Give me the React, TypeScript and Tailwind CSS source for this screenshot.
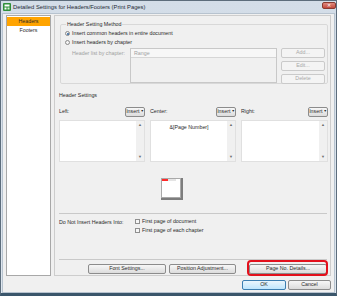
import React from "react";

const Btn = ({
  children,
  className = "",
  disabled = false,
}: {
  children: React.ReactNode;
  className?: string;
  disabled?: boolean;
}) => (
  <div
    className={`h-[10px] flex items-center justify-center rounded-[2px] border leading-none ${
      disabled
        ? "border-[#cacaca] bg-[#f4f4f4] text-[#a8a8a8]"
        : "border-[#8c8c8c] bg-gradient-to-b from-[#f7f7f7] to-[#dcdcdc] text-[#2a2a2a]"
    } ${className}`}
  >
    {children}
  </div>
);

const InsertBtn = () => (
  <Btn className="w-[20px] gap-[1px]">
    Insert<span className="text-[3.5px]">▼</span>
  </Btn>
);

const TextBox = ({ text }: { text?: string }) => (
  <div className="h-[42px] bg-white border border-[#e0e0e0] flex">
    <div className="flex-1 text-center pt-[3px] text-[#2a2a2a]">{text}</div>
    <div className="w-[8px] bg-[#f0f0f0] flex flex-col justify-between items-center py-[1px] text-[4px] leading-[6px] text-[#6d6d6d]">
      <span>▲</span>
      <span>▼</span>
    </div>
  </div>
);

const Radio = ({ checked = false, label }: { checked?: boolean; label: string }) => (
  <div className="flex items-center gap-[2px] h-[9px]">
    <div className="w-[5px] h-[5px] rounded-full border border-[#8a8a8a] bg-[#f4f4f4] flex items-center justify-center">
      {checked && <div className="w-[2px] h-[2px] rounded-full bg-[#2a5f9a]" />}
    </div>
    <span className="text-[#2a2a2a]">{label}</span>
  </div>
);

const Check = ({ label }: { label: string }) => (
  <div className="flex items-center gap-[2px] h-[9px]">
    <div className="w-[5px] h-[5px] border border-[#8f8f8f] bg-[#f6f6f6]" />
    <span className="text-[#2a2a2a]">{label}</span>
  </div>
);

export default function App() {
  return (
    <div className="w-[337px] h-[296px] bg-gradient-to-b from-[#d3dde8] to-[#dfe7ef] border-t border-x border-[#5d6d7c] border-b-[3px] border-b-[#3a566b] flex flex-col font-['Liberation_Sans',Arial,sans-serif] text-[5.3px] overflow-hidden">
      {/* title bar */}
      <div className="h-[12px] flex items-center pl-[2px]">
        <svg width="8" height="8" viewBox="0 0 8 8">
          <rect x="0" y="0" width="8" height="8" rx="1" fill="#2f8f3a" />
          <rect x="1.5" y="1.5" width="5" height="2" fill="#ffffff" />
          <rect x="1.5" y="4.5" width="2" height="2" fill="#ffffff" />
          <rect x="4.5" y="4.5" width="2" height="2" fill="#d6f0d6" />
        </svg>
        <span className="ml-[2px] text-[5.8px] text-[#1d2a36]">
          Detailed Settings for Headers/Footers (Print Pages)
        </span>
        <div className="ml-auto -mt-[3px] w-[14px] h-[7px] rounded-[2px] bg-gradient-to-b from-[#e08a80] to-[#c2483c] border border-[#8a3a30] flex items-center justify-center text-white text-[5px] leading-none">
          ✕
        </div>
      </div>

      {/* client area */}
      <div className="flex-1 mx-[1px] bg-[#f0f0f0] border border-[#b7c3cf] flex flex-col">
        <div className="flex mt-[1px] ml-[3px] gap-[3px]">
          {/* sidebar */}
          <div className="w-[45px] h-[261px] bg-white border border-[#a8a8a8] pt-[1px] flex flex-col">
            <div className="h-[9px] bg-[#ffa400] flex items-center justify-center text-[#2a2a2a]">Headers</div>
            <div className="h-[10px] flex items-center justify-center text-[#2a2a2a]">Footers</div>
          </div>

          {/* main panel */}
          <div className="w-[277px] h-[261px] border border-[#cdcdcd] pl-[4px] pr-[3px] flex flex-col">
            <fieldset className="mt-[4px] ml-[1px] border border-[#d8d8d8] rounded-[2px] pl-[4px] pr-[2px] pb-[1px] h-[64px]">
              <legend className="px-[1px] ml-[1px] leading-[8px] text-[#2a2a2a]">Header Setting Method</legend>
              <div className="mt-[1px]">
                <Radio checked label="Insert common headers in entire document" />
                <Radio label="Insert headers by chapter" />
              </div>
              <div className="flex mt-[1px]">
                <div className="w-[65px] pl-[7px] pt-[2px] text-[#a0a0a0]">Header list by chapter:</div>
                <div className="w-[147px] h-[35px] border border-[#c8c8c8] bg-[#f0f0f0]">
                  <div className="h-[9px] border-b border-[#d6d6d6] bg-[#f7f7f7] pl-[3px] leading-[9px] text-[#a0a0a0]">
                    Range
                  </div>
                </div>
                <div className="ml-[4px] w-[44px] flex flex-col gap-[3px]">
                  <Btn disabled>Add...</Btn>
                  <Btn disabled>Edit...</Btn>
                  <Btn disabled>Delete</Btn>
                </div>
              </div>
            </fieldset>

            <div className="mt-[7px] leading-[8px] text-[#2a2a2a]">Header Settings</div>

            <div className="mt-[8px] grid grid-cols-[86px_86px_87px] gap-x-[5px] w-[268px]">
              <div className="flex items-center justify-between text-[#2a2a2a]">
                <span>Left:</span>
                <InsertBtn />
              </div>
              <div className="flex items-center justify-between text-[#2a2a2a]">
                <span>Center:</span>
                <InsertBtn />
              </div>
              <div className="flex items-center justify-between text-[#2a2a2a]">
                <span>Right:</span>
                <InsertBtn />
              </div>
              <div className="mt-[3px]">
                <TextBox />
              </div>
              <div className="mt-[3px]">
                <TextBox text="&[Page Number]" />
              </div>
              <div className="mt-[3px]">
                <TextBox />
              </div>
            </div>

            {/* page preview */}
            <div className="mt-[16px] ml-[102px] w-[20px] h-[20px] bg-white border border-[#a9a9a9] shadow-[1px_1px_0_1px_#7d7d7d]">
              <div className="flex h-[2px]">
                <div className="w-[6px] bg-[#ff2a2a]" />
                <div className="w-[8px] bg-[#e4e4e4]" />
              </div>
            </div>

            <div className="mt-[15px] h-px w-[268px] bg-[#c9c9c9]" />

            <div className="mt-[3px] flex">
              <div className="w-[76px] pt-[2px] text-[#2a2a2a]">Do Not Insert Headers Into:</div>
              <div className="flex flex-col">
                <Check label="First page of document" />
                <Check label="First page of each chapter" />
              </div>
            </div>

            <div className="mt-[24px] h-px w-[268px] bg-[#c9c9c9]" />

            <div className="mt-[4px] flex w-[268px] justify-end">
              <Btn className="w-[78px]">Font Settings...</Btn>
              <Btn className="w-[67px] ml-[3px]">Position Adjustment...</Btn>
              <div className="relative ml-[13px]">
                <Btn className="w-[78px]">Page No. Details...</Btn>
                <div className="absolute -left-[2px] -right-[1px] -top-[4px] -bottom-[2px] border-2 border-[#e3101c] rounded-[4px]" />
              </div>
            </div>
          </div>
        </div>

        <div className="mt-[4px] mr-[3px] flex justify-end gap-[2px]">
          <Btn className="w-[44px] !border-[#3c7fb1] !from-[#eaf6fd] !to-[#bee6fd]">OK</Btn>
          <Btn className="w-[43px]">Cancel</Btn>
        </div>
      </div>
    </div>
  );
}
